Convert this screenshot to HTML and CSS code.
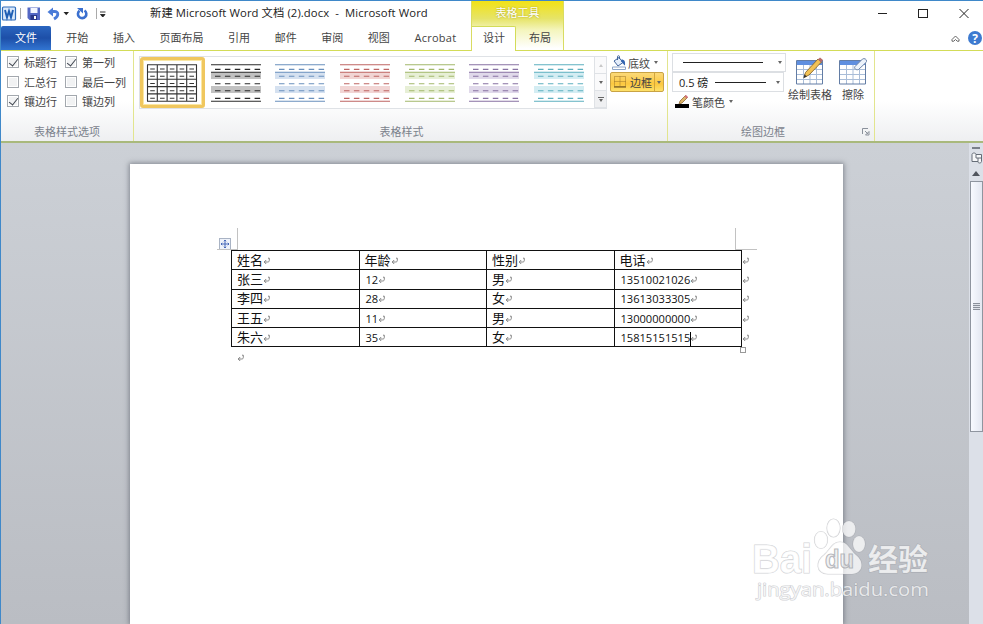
FILE: index.html
```
<!DOCTYPE html>
<html lang="zh-CN">
<head>
  <meta charset="UTF-8" />
  <meta name="viewport" content="width=device-width, initial-scale=1.0"/>
  <title>新建 Microsoft Word 文档 (2).docx - Microsoft Word</title>
  <link rel="stylesheet" href="styles.css">
</head>
<body>
  <!-- shared shapes -->
  <svg class="defs" width="0" height="0">
    <symbol id="ret" viewBox="0 0 8 8">
      <path d="M5 1.2h1.3v2.3c0 1-.6 1.5-1.6 1.5H1.2M3.2 3L1.2 5l2 2" fill="none" stroke="#777" stroke-width=".9"/>
    </symbol>
    <symbol id="banded" viewBox="0 0 50 38">
      <path class="band" d="M0 8h50v7H0zM0 22h50v7H0z"/>
      <path d="M0 .8h50M0 8.2h50M0 37.2h50" stroke="currentColor" stroke-width="1.1"/>
      <path d="M4 5.4h46M4 12.2h46M4 19.8h46M4 26.8h46M4 34.4h46" stroke="currentColor" stroke-width="1.1" stroke-dasharray="5.5 4.4"/>
    </symbol>
    <symbol id="grid" viewBox="0 0 28 26">
      <path d="M1 1h26v24H1z" fill="#fff"/>
      <path d="M1 1h26v5H1z" fill="#5f8fe0"/>
      <path d="M1 10.5h26M1 15.5h26M1 20.5h26M7.5 6v19M14 6v19M20.5 6v19" stroke="#a9bdd8" fill="none"/>
      <path d="M.5 1.5h26v23.500H.5z" stroke="#637da5" fill="none"/>
    </symbol>
  </svg>

  <div class="window">
    <header class="head">
      <div class="titlebar">
        <div class="quick">
          <svg width="107" height="24" viewBox="0 0 107 24">
            <rect x="1.500" y="6" width="13" height="13" rx="1" fill="#d9e8fa" stroke="#2f6cba" stroke-width="1.200"/>
            <path d="M4 9l2 7.500 2-6.500 2 6.500L12 9" fill="none" stroke="#1f5fb4" stroke-width="1.900"/>
            <path d="M19.500 7v11M95.500 7v11" stroke="#aaa"/>
            <path d="M26.500 6.500h12.500v12.500H28.500l-2-2z" fill="#5468c4"/>
            <path d="M29.500 7h7v5h-7z" fill="#f3f6ff"/>
            <path d="M29.500 14h6.500v5h-6.500z" fill="#2b3888"/><path d="M33 15h2v3h-2z" fill="#fff"/>
            <path d="M50 10.500h3.500c4.500 0 4.500 4.500-.5 7.500" fill="none" stroke="#4a7bd8" stroke-width="2.800"/>
            <path d="M46.500 11l5.500-4.500v9z" fill="#4a7bd8"/>
            <path d="M62.500 11h5.500l-2.750 3.200z" fill="#222"/>
            <path d="M83.500 9.500a4.200 4.200 0 1 1-5 .2" fill="none" stroke="#3b70cf" stroke-width="2.600"/>
            <path d="M76 7h6v5.500z" fill="#3b70cf"/>
            <path d="M99 11h5.500M99.500 13.500h4.500l-2.250 2.500z" fill="#222" stroke="#222" stroke-width=".9"/>
          </svg>
        </div>
        <h1>新建 Microsoft Word 文档 (2).docx&nbsp; - &nbsp;Microsoft Word</h1>
        <svg class="winbtns" width="100" height="24" viewBox="0 0 100 24" fill="none" stroke="#222">
          <path d="M1 12.500h9"/>
          <rect x="41.500" y="8.500" width="9" height="8"/>
          <path d="M82.500 8l9 9M91.500 8l-9 9"/>
        </svg>
      </div>

      <nav class="tabs">
        <a class="file">文件</a>
        <a>开始</a>
        <a>插入</a>
        <a>页面布局</a>
        <a>引用</a>
        <a>邮件</a>
        <a>审阅</a>
        <a>视图</a>
        <a class="latin">Acrobat</a>
        <svg class="help" width="32" height="16" viewBox="0 0 32 16">
          <path d="M2 9.500L5.500 6 9 9.500v1.700H7.200L5.500 9.500 3.800 11.200H2z" fill="#fff" stroke="#555" stroke-width=".9"/>
          <circle cx="25" cy="8" r="7" fill="#3d7ad0"/>
          <text x="25" y="12.500" text-anchor="middle">?</text>
        </svg>
      </nav>
      <div class="context">
        <div class="context-title">表格工具</div>
        <div class="context-tabs"><a class="active">设计</a><a>布局</a></div>
      </div>
    </header>

    <section class="ribbon">
      <div class="group options">
        <div class="checks">
          <label><i class="box on"></i>标题行</label>
          <label><i class="box on"></i>第一列</label>
          <label><i class="box"></i>汇总行</label>
          <label><i class="box"></i>最后一列</label>
          <label><i class="box on"></i>镶边行</label>
          <label><i class="box"></i>镶边列</label>
        </div>
        <div class="caption">表格样式选项</div>
      </div>

      <div class="group styles">
        <div class="styles-row">
          <div class="gallery">
            <div class="item selected">
              <svg width="52" height="38" viewBox="0 0 52 38">
                <path d="M1 .8h50M1 8h50M1 15.300h50M1 22.600h50M1 29.900h50M1 37.200h50M1.500 .5v37M11.300 .5v37M21.100 .5v37M30.900 .5v37M40.700 .5v37M50.500 .5v37" stroke="#333" stroke-width="1.100"/>
                <path d="M4.200 5h46M4.200 12.200h46M4.200 19.500h46M4.200 26.800h46M4.200 34.200h46" stroke="#333" stroke-width="1.100" stroke-dasharray="4.600 5.200"/>
              </svg>
            </div>
            <div class="item black"><svg width="50" height="38"><use href="#banded"/></svg></div>
            <div class="item blue"><svg width="50" height="38"><use href="#banded"/></svg></div>
            <div class="item red"><svg width="50" height="38"><use href="#banded"/></svg></div>
            <div class="item green"><svg width="50" height="38"><use href="#banded"/></svg></div>
            <div class="item purple"><svg width="50" height="38"><use href="#banded"/></svg></div>
            <div class="item aqua"><svg width="50" height="38"><use href="#banded"/></svg></div>
            <div class="scroller">
              <span><i class="up"></i></span>
              <span><i class="down"></i></span>
              <span class="more"><i class="down"></i></span>
            </div>
          </div>
          <div class="shading">
            <div class="tool">
              <svg width="16" height="15" viewBox="0 0 16 15">
                <path d="M3 6l5-3.500 4 5L7 11z" fill="#e5eefb" stroke="#42659c"/>
                <path d="M6.500 5V1.500c0-1 2-1 2 0V4" fill="none" stroke="#42659c"/>
                <path d="M10.500 4.500c3 0 4 2 3.500 6-1.500-.5-2-3-4-4z" fill="#3465b0"/>
                <path d="M1.500 12h13v2.500h-13z" fill="#fff" stroke="#8fa6c8"/>
              </svg>
              <span>底纹</span><i class="down"></i>
            </div>
            <div class="tool pressed">
              <svg width="16" height="14" viewBox="0 0 16 14">
                <path d="M2.500 1.500h11v10h-11zM8 1.500v10M2.500 6.500h11" fill="none" stroke="#9c7428" stroke-dasharray="1 1"/>
                <path d="M2 12h12" stroke="#5e481c"/>
              </svg>
              <span>边框</span><b></b><i class="down"></i>
            </div>
          </div>
        </div>
        <div class="caption">表格样式</div>
      </div>

      <div class="group draw">
        <div class="draw-row">
          <div class="pens">
            <div class="combo line"><hr><i class="down"></i></div>
            <div class="combo weight"><span>0.5 磅</span><hr><i class="down"></i></div>
            <div class="tool pencolor">
              <svg width="16" height="15" viewBox="0 0 16 15">
                <path d="M5 10l1-3 5.500-5.500 2 2L8 9z" fill="#e0b568" stroke="#8d6a3a" stroke-width=".8"/>
                <path d="M10.500 2.500l1.500-1.500 2 2-1.500 1.500z" fill="#d4707a"/>
                <path d="M1 10h14v4H1z" fill="#000"/>
              </svg>
              <span>笔颜色</span><i class="down"></i>
            </div>
          </div>
          <div class="big">
            <svg width="28" height="28" viewBox="0 0 28 28">
              <use href="#grid" y="2" width="28" height="26"/>
              <path d="M8 20.500l1.500-5L22 2l3.500 3L13 18z" fill="#f2c255" stroke="#87662c" stroke-width=".9"/>
              <path d="M22 2.500L24 .5 27 3l-2 2.500z" fill="#b86c68"/><path d="M7.500 21l1-3.500 2.500 2z" fill="#333"/>
            </svg>
            <span>绘制表格</span>
          </div>
          <div class="big">
            <svg width="28" height="28" viewBox="0 0 28 28">
              <use href="#grid" y="2" width="28" height="26"/>
              <path d="M16 9.500l7.500-7.500c1.500-1 4.500 0 4 2.500l-.5 1-7.500 7c-2 1-5-1-3.500-3z" fill="#edf3fb" stroke="#6b82a8"/>
            </svg>
            <span>擦除</span>
          </div>
        </div>
        <div class="caption">绘图边框
          <svg class="launcher" width="8" height="8" viewBox="0 0 8 8"><path d="M.5 6V.5H6M3 3l3 3M7 3.500V7H3.500z" fill="none" stroke="#8a919b"/></svg>
        </div>
      </div>
    </section>

    <main class="workspace">
      <div class="page">
        <div class="sheet">
          <svg class="handle" width="12" height="12" viewBox="0 0 12 12">
            <rect x=".5" y=".5" width="11" height="11" fill="#eef2fa" stroke="#a9b3c4"/>
            <path d="M6 2v8M2 6h8M4.800 3.200L6 2l1.200 1.200M4.800 8.800L6 10l1.200-1.200M3.200 4.800L2 6l1.200 1.200M8.800 4.800L10 6 8.800 7.200" fill="none" stroke="#4668b8"/>
          </svg>
          <i class="corner left"></i>
          <i class="corner right"></i>
          <table>
            <tr><td>姓名<svg><use href="#ret"/></svg></td><td>年龄<svg><use href="#ret"/></svg></td><td>性别<svg><use href="#ret"/></svg></td><td>电话<svg><use href="#ret"/></svg></td><td class="end"><svg><use href="#ret"/></svg></td></tr>
            <tr><td>张三<svg><use href="#ret"/></svg></td><td class="num">12<svg><use href="#ret"/></svg></td><td>男<svg><use href="#ret"/></svg></td><td class="num">13510021026<svg><use href="#ret"/></svg></td><td class="end"><svg><use href="#ret"/></svg></td></tr>
            <tr><td>李四<svg><use href="#ret"/></svg></td><td class="num">28<svg><use href="#ret"/></svg></td><td>女<svg><use href="#ret"/></svg></td><td class="num">13613033305<svg><use href="#ret"/></svg></td><td class="end"><svg><use href="#ret"/></svg></td></tr>
            <tr><td>王五<svg><use href="#ret"/></svg></td><td class="num">11<svg><use href="#ret"/></svg></td><td>男<svg><use href="#ret"/></svg></td><td class="num">13000000000<svg><use href="#ret"/></svg></td><td class="end"><svg><use href="#ret"/></svg></td></tr>
            <tr><td>朱六<svg><use href="#ret"/></svg></td><td class="num">35<svg><use href="#ret"/></svg></td><td>女<svg><use href="#ret"/></svg></td><td class="num">15815151515<i class="caret"></i><svg><use href="#ret"/></svg></td><td class="end"><svg><use href="#ret"/></svg></td></tr>
          </table>
          <i class="resize"></i>
          <p class="after"><svg><use href="#ret"/></svg></p>
        </div>
      </div>

      <aside class="scrollbar">
        <div class="split"></div>
        <svg class="ruler" width="13" height="14" viewBox="0 0 13 14">
          <path d="M2 3.500c0-1 1-1.500 2-1.500s2 .5 2 1.500h5.500v7c0 1-1 1.500-2 1.500s-1.500-.5-1.500-1.500H2z" fill="#f6f7f9" stroke="#666d78"/>
          <path d="M6 3.500V7h2v3.500M8 7h3.500" fill="none" stroke="#666d78"/>
        </svg>
        <i class="arrow"></i>
        <div class="thumb"><span></span></div>
      </aside>

      <svg class="watermark" width="190" height="90" viewBox="0 0 190 90">
        <g class="paw">
          <ellipse cx="80" cy="23" rx="6.500" ry="8.500"/>
          <ellipse cx="92.500" cy="11" rx="6.500" ry="9"/>
          <ellipse cx="108" cy="12" rx="6.500" ry="8"/>
          <ellipse cx="118" cy="27" rx="6" ry="8"/>
          <path d="M99 25c8 0 10 8 16 13 8 6 8 18-4 19H87c-13-1-12-13-4-19 6-5 8-13 16-13z"/>
        </g>
        <text class="bai" x="11" y="56" textLength="60" lengthAdjust="spacingAndGlyphs">Bai</text>
        <text class="du" x="84" y="51" textLength="29" lengthAdjust="spacingAndGlyphs">du</text>
        <text class="exp" x="127" y="53" textLength="60" lengthAdjust="spacingAndGlyphs">经验</text>
        <text class="url" x="16" y="79" textLength="172" lengthAdjust="spacingAndGlyphs">jingyan.baidu.com</text>
      </svg>
    </main>
  </div>
</body>
</html>
```
FILE: styles.css
```
* {
  box-sizing: border-box;
  margin: 0;
  padding: 0;
}

body {
  width: 983px;
  height: 624px;
  overflow: hidden;
  font-family: "Open Sans", "Noto Sans CJK SC", sans-serif;
  font-size: 11px;
  color: #444;
}

svg {
  display: block;
  flex: none;
}

.defs {
  position: absolute;
}

.window {
  display: flex;
  flex-direction: column;
  height: 624px;
  border-top: 1px solid #3f88c9;
  border-left: 1px solid #3f88c9;
}

/* title and tabs */
.head {
  position: relative;
  height: 50px;
  border-bottom: 1px solid #d3dc58;
  background: #fff;
}

.titlebar {
  display: flex;
  height: 25px;
}

.quick {
  width: 149px;
}

.titlebar h1 {
  flex: 1;
  font-size: 11.3px;
  font-weight: normal;
  line-height: 24px;
  letter-spacing: 0.09px;
  color: #222;
  white-space: nowrap;
}

.winbtns {
  margin-right: 6px;
}

.tabs {
  display: flex;
  height: 24px;
  line-height: 24px;
}

.tabs a {
  padding: 0 12.3px;
}

.tabs .latin {
  letter-spacing: 0.25px;
}

.tabs .file {
  width: 50px;
  margin-right: 3px;
  padding: 0;
  text-align: center;
  color: #fff;
  background: linear-gradient(#2b66c0, #1d4fa8 50%, #3275d2);
  border-radius: 2px 2px 0 0;
}

.help {
  margin: 4px 1px 0 auto;
}

.help text {
  font-size: 12px;
  font-weight: bold;
  fill: #fff;
}

.context {
  position: absolute;
  left: 470px;
  top: 0;
  width: 93px;
  height: 50px;
  border: solid #d9dc62;
  border-width: 0 1px;
  background: linear-gradient(#f2e215, #e6e468 35%, #f4f5bd 58%, #fff 95%);
}

.context-title {
  height: 25px;
  line-height: 23px;
  text-align: center;
  color: #fff;
  text-shadow: 0 0 2px #a09a20;
}

.context-tabs {
  display: flex;
  height: 25px;
  line-height: 24px;
}

.context-tabs a {
  flex: 1;
  padding-left: 13px;
  border-bottom: 1px solid #d3dc58;
}

.context-tabs .active {
  flex: none;
  width: 44px;
  padding-left: 11px;
  line-height: 22px;
  background: #fff;
  border: 1px solid #d3dc58;
  border-width: 1px 1px 0 0;
  border-radius: 0 2px 0 0;
}

/* ribbon */
.ribbon {
  display: flex;
  height: 92px;
  background: linear-gradient(#fff 55%, #eeeff1);
  border-bottom: 2px solid #a9b97c;
}

.group {
  display: flex;
  flex-direction: column;
  justify-content: space-between;
  border-right: 1px solid #e2e58e;
}

.options { width: 133px; }
.styles { width: 534px; }
.draw { width: 207px; }

.caption {
  position: relative;
  height: 18px;
  line-height: 17px;
  text-align: center;
  color: #7b828c;
}

.styles .caption { padding-left: 2px; }
.draw .caption { padding-right: 16px; }

.checks {
  display: grid;
  grid-template-columns: 58px 1fr;
  grid-auto-rows: 19.8px;
  padding: 1px 0 0 6px;
}

.checks label {
  display: flex;
  align-items: center;
  gap: 5px;
  white-space: nowrap;
}

.box {
  position: relative;
  width: 12px;
  height: 12px;
  border: 1px solid #a3a8ae;
  background: #f1f2f3;
  box-shadow: inset 0 0 0 1px #fff;
}

.box.on::after {
  content: "";
  position: absolute;
  left: 3px;
  top: 0;
  width: 4px;
  height: 8px;
  border: solid #3d434d;
  border-width: 0 1.4px 1.4px 0;
  transform: rotate(38deg);
}

.styles-row {
  display: flex;
  padding-left: 5px;
}

.gallery {
  display: flex;
  width: 468px;
  height: 53px;
  margin-top: 5px;
  border: 1px solid #dfe2e6;
  background: #fff;
}

.item {
  display: flex;
  align-items: center;
  justify-content: center;
  width: 64.6px;
  height: 51px;
  padding-right: 2px;
}

.item.selected {
  padding-right: 1px;
  border: 3px solid #f0c75e;
  outline: 1px solid #fae7a4;
  outline-offset: -4px;
  border-radius: 3px;
}

.item.black { color: #2b2b2b; }
.item.blue { color: #6990bd; }
.item.red { color: #be6563; }
.item.green { color: #a2b86b; }
.item.purple { color: #8872a3; }
.item.aqua { color: #5eb0c0; }

.band { fill: var(--band); }
.item.black { --band: #c1c1c1; }
.item.blue { --band: #d5e1f0; }
.item.red { --band: #f1d5d4; }
.item.green { --band: #e7efd6; }
.item.purple { --band: #e0d9ea; }
.item.aqua { --band: #d4edf3; }

.scroller {
  width: 12px;
  margin-left: auto;
  border-left: 1px solid #dfe2e6;
}

.scroller span {
  display: flex;
  align-items: center;
  justify-content: center;
  height: 17px;
  border-bottom: 1px solid #dfe2e6;
  background: #fafafb;
}

.scroller .more {
  flex-direction: column;
  gap: 1px;
  background: #eff0f2;
}

.more::before {
  content: "";
  width: 6px;
  height: 1px;
  background: #666;
}

.up,
.down {
  flex: none;
  border: solid transparent;
  border-width: 0 2.5px;
}

.down { border-top: 3px solid #666; }
.up { border-bottom: 3px solid #c8c8c8; }

.shading {
  padding: 2px 0 0 3px;
}

.tool {
  display: flex;
  align-items: center;
  gap: 4px;
  width: 54px;
  height: 19px;
  padding-left: 1px;
  white-space: nowrap;
}

.tool span {
  margin-left: -3px;
}

.tool.pressed {
  gap: 2px;
  height: 20px;
  border: 1px solid #c9a344;
  border-radius: 2px;
  background: linear-gradient(#fbd978, #fcc83f 60%, #fde16b);
}

.pressed span { margin-left: 0; }

.tool b {
  height: 18px;
  border-left: 1px solid #d3a63c;
}

.draw-row {
  display: flex;
  padding-left: 4px;
}

.pens {
  width: 114px;
  padding-top: 2px;
}

.combo {
  display: flex;
  align-items: center;
  height: 20px;
  border: 1px solid #dcdfe3;
  background: #fff;
  color: #222;
}

.combo hr {
  height: 1px;
  border: 0;
  background: #222;
}

.combo .down {
  margin: 0 3px 0 auto;
}

.line { width: 114px; height: 19px; padding-left: 10px; }
.line hr { width: 80px; }
.weight { width: 112px; padding-left: 6px; }
.weight span { width: 36px; white-space: nowrap; }
.weight hr { width: 51px; }
.pencolor { width: 70px; padding-left: 2px; }
.pencolor span { margin-left: -2px; }

.big {
  display: flex;
  flex-direction: column;
  align-items: center;
  width: 43px;
  padding-top: 6px;
  line-height: 19px;
  white-space: nowrap;
}

.pens + .big {
  width: 44px;
  margin-left: 2px;
}

.pens + .big + .big {
  width: 42px;
}

.launcher {
  position: absolute;
  right: 4px;
  top: 5px;
}

/* document area */
.workspace {
  position: relative;
  display: flex;
  flex: 1;
  background: linear-gradient(#ccd0d6, #babdc3);
}

.page {
  width: 713px;
  margin: 21px 0 0 129px;
  padding: 86px 0 0 101px;
  background: #fff;
  box-shadow: 0 0 5px 1px rgba(70, 75, 85, 0.55);
}

.sheet {
  position: relative;
  width: 530px;
}

.handle {
  position: absolute;
  left: -12px;
  top: -12px;
}

.corner {
  position: absolute;
  top: -22px;
  width: 21px;
  height: 22px;
  border-bottom: 1px solid #c2c2c2;
}

.corner.left {
  left: -14px;
  border-right: 1px solid #c2c2c2;
}

.corner.right {
  left: 504px;
  width: 22px;
  border-left: 1px solid #c2c2c2;
}

table {
  width: 520px;
  table-layout: fixed;
  border-collapse: collapse;
  color: #111;
}

td {
  width: 127.5px;
  height: 19.3px;
  padding-left: 5px;
  border: 1px solid #111;
  font-size: 13px;
  line-height: 17px;
  white-space: nowrap;
}

td svg {
  display: inline-block;
  width: 8px;
  height: 8px;
}

td.num {
  padding-left: 6px;
  font-size: 11.1px;
}

td.end {
  width: 10px;
  padding-left: 0;
  border-width: 0 0 0 1px;
}

.caret {
  display: inline-block;
  width: 1px;
  height: 14px;
  margin-right: -1px;
  vertical-align: middle;
  background: #000;
}

.resize {
  position: absolute;
  left: 509px;
  top: 97px;
  width: 6px;
  height: 6px;
  border: 1px solid #999;
  background: #fff;
}

.after {
  padding: 7px 0 0 6px;
}

.after svg {
  width: 8px;
  height: 8px;
}

.scrollbar {
  display: flex;
  flex-direction: column;
  align-items: center;
  width: 14px;
  margin-left: auto;
  background: #dce0e8;
}

.split {
  width: 8px;
  height: 2px;
  margin-top: 4px;
  background: #7a808a;
}

.ruler {
  margin-top: 2px;
}

.arrow {
  margin: 6px 0 5px;
  border: solid transparent;
  border-width: 0 4px 5px;
  border-bottom-color: #50555e;
}

.thumb {
  display: flex;
  align-items: center;
  justify-content: center;
  width: 13px;
  height: 251px;
  border: 1px solid #8f959f;
  background: linear-gradient(90deg, #f8faff, #e3e7f1);
}

.thumb span {
  width: 7px;
  height: 7px;
  background: repeating-linear-gradient(#8b919c 0 1px, #dfe3ea 1px 2px);
}

.watermark {
  position: absolute;
  left: 740px;
  top: 374px;
  overflow: visible;
  fill: rgba(255, 255, 255, 0.72);
  stroke: rgba(150, 153, 160, 0.45);
  stroke-width: 1.2;
  paint-order: stroke;
}

.bai { font: bold 41px "Liberation Sans", sans-serif; }
.exp { font: bold 30px "Noto Sans CJK SC", sans-serif; }
.url { font: 19px "Open Sans", sans-serif; }

.du {
  font: bold 25px "Liberation Sans", sans-serif;
  fill: rgba(200, 202, 206, 0.25);
  stroke: rgba(150, 153, 160, 0.7);
}
```
